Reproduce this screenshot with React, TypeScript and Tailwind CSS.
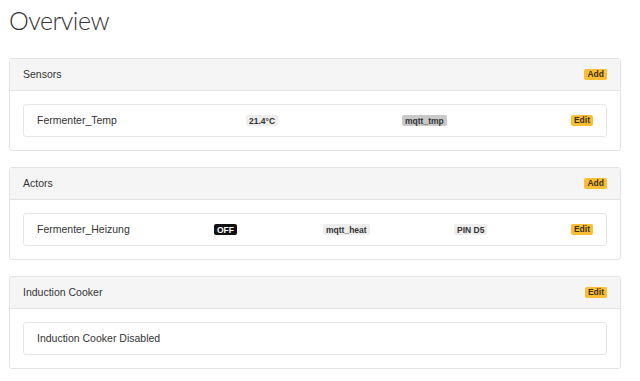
import type { ReactNode } from "react";

function Badge({ children, tone = "light" }: { children: ReactNode; tone?: "light" | "gray" | "dark" | "warn" }) {
  const tones = {
    light: "bg-[#ededed] text-[#333]",
    gray: "bg-[#c9c9c9] text-[#333]",
    dark: "bg-[#111] text-white",
    warn: "bg-[#fcbd32] text-[#3a3220]",
  };
  return (
    <span className={`inline-flex h-[11px] items-center rounded-[2px] px-[3px] text-[8.5px] font-bold leading-none ${tones[tone]}`}>
      {children}
    </span>
  );
}

function Card({ title, action, children }: { title: string; action: string; children: ReactNode }) {
  return (
    <section className="rounded-[3px] border border-[#e3e3e3] bg-white">
      <div className="flex h-[32px] items-center justify-between border-b border-[#e3e3e3] bg-[#f5f5f5] pl-[13px] pr-[13px]">
        <span className="text-[10.5px] text-[#333]">{title}</span>
        <Badge tone="warn">{action}</Badge>
      </div>
      <div className="px-[13px] py-[13px]">{children}</div>
    </section>
  );
}

function Item({ children }: { children: ReactNode }) {
  return (
    <div className="flex h-[33px] items-center rounded-[3px] border border-[#e6e6e6] pl-[13px] pr-[13px] text-[10.5px] text-[#333]">
      {children}
    </div>
  );
}

export default function App() {
  return (
    <div className="min-h-[381px] bg-white px-[9px] font-['Liberation_Sans',Arial,sans-serif]">
      <h1 className="pt-[6px] pb-[24px] text-[25px] font-light leading-[28px] tracking-[-0.5px] text-[#333] font-['Lato',sans-serif]">
        Overview
      </h1>
      <div className="flex flex-col gap-[16px] w-[612px]">
        <Card title="Sensors" action="Add">
          <Item>
            <div className="w-[209px]">Fermenter_Temp</div>
            <div className="w-[156px]">
              <Badge>21.4°C</Badge>
            </div>
            <div className="flex-1">
              <Badge tone="gray">mqtt_tmp</Badge>
            </div>
            <Badge tone="warn">Edit</Badge>
          </Item>
        </Card>
        <Card title="Actors" action="Add">
          <Item>
            <div className="w-[177px]">Fermenter_Heizung</div>
            <div className="w-[109px]">
              <Badge tone="dark">OFF</Badge>
            </div>
            <div className="w-[131px]">
              <Badge>mqtt_heat</Badge>
            </div>
            <div className="flex-1">
              <Badge>PIN D5</Badge>
            </div>
            <Badge tone="warn">Edit</Badge>
          </Item>
        </Card>
        <Card title="Induction Cooker" action="Edit">
          <Item>
            <div>Induction Cooker Disabled</div>
          </Item>
        </Card>
      </div>
    </div>
  );
}
